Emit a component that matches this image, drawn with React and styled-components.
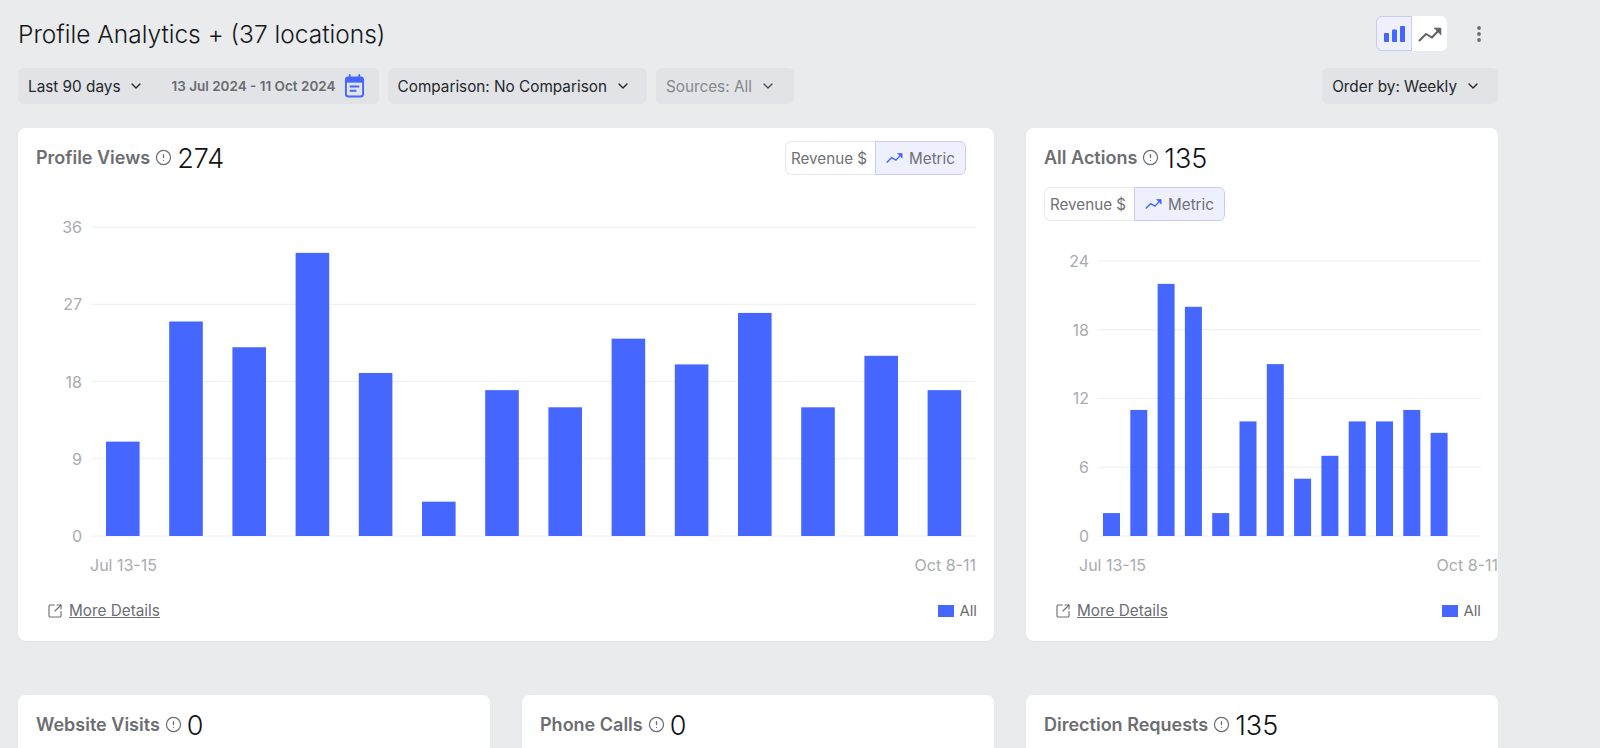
import React from "react"
import styled, { createGlobalStyle } from "styled-components"
import { ChevronDown, CircleAlert, SquareArrowOutUpRight } from "lucide-react"

const GlobalStyle = createGlobalStyle`
  html, body {
    margin: 0;
    height: 100%;
    overflow: hidden;
    background: #e9ebec;
  }
  body {
    font-family: Inter, "Liberation Sans", sans-serif;
  }
`

const Page = styled.div`
  width: 1480px;
  height: 748px;
  padding: 16px 0 0 18px;
  overflow: hidden;
`

const TopBar = styled.div`
  display: flex;
  justify-content: space-between;
  align-items: center;
  height: 35px;
`

const PageTitle = styled.h1`
  margin: 0;
  padding-top: 2px;
  font-size: 24.5px;
  font-weight: 300;
  line-height: 33px;
  color: #15171a;
`

const TopActions = styled.div`
  display: flex;
  align-items: center;
  gap: 20px;
  padding-right: 7px;
`

const ViewToggle = styled.div`
  display: flex;
  height: 35px;
`

const ViewButton = styled.div`
  width: ${(p) => (p.$active ? "36px" : "35px")};
  display: flex;
  align-items: center;
  justify-content: center;
  box-sizing: border-box;
  background: ${(p) => (p.$active ? "#eef0fd" : "#fff")};
  border: 1px solid ${(p) => (p.$active ? "#c6ccf4" : "#fff")};
  border-radius: ${(p) => (p.$active ? "6px 0 0 6px" : "0 6px 6px 0")};
`

const Kebab = styled.div`
  width: 24px;
  display: flex;
  justify-content: center;
`

const FilterRow = styled.div`
  display: flex;
  justify-content: space-between;
  margin-top: 17px;
`

const FilterGroup = styled.div`
  display: flex;
  gap: 9px;
`

const Filter = styled.div`
  display: flex;
  align-items: center;
  height: 36px;
  padding: 0 ${(p) => p.$right || 17}px 0 10px;
  gap: 8px;
  background: #e1e3e6;
  border-radius: 6px;
  font-size: 15.3px;
  color: ${(p) => (p.$muted ? "#85888d" : "#25272b")};
  white-space: nowrap;
`

const DateText = styled.span`
  margin-left: 19px;
  font-size: 13.5px;
  font-weight: 600;
  color: #686b70;
`

const CardGrid = styled.div`
  display: grid;
  grid-template-columns: repeat(3, 472px);
  column-gap: 32px;
  row-gap: 54px;
  margin-top: 24px;
`

const Card = styled.section`
  grid-column: span ${(p) => p.$span || 1};
  height: ${(p) => (p.$small ? "auto" : "513px")};
  padding: 12px 0 ${(p) => (p.$small ? "200px" : "0")};
  box-sizing: border-box;
  background: #fff;
  border-radius: 8px;
  box-shadow: 0 1px 2px rgba(30, 35, 45, 0.04);
  overflow: hidden;
`

const CardHead = styled.div`
  display: flex;
  justify-content: space-between;
  align-items: center;
  padding: 1px 28px 0 18px;
`

const Heading = styled.div`
  display: flex;
  align-items: center;
  height: 34px;
  padding-bottom: 2px;
  box-sizing: border-box;
`

const HeadingName = styled.span`
  font-size: 18px;
  font-weight: 600;
  color: #6c6e72;
`

const HeadingValue = styled.span`
  margin: 2px 0 0 5px;
  font-size: 27px;
  font-weight: 300;
  color: #111316;
`

const InfoIcon = styled(CircleAlert)`
  margin-left: 5px;
  color: #6c6e72;
`

const MetricToggle = styled.div`
  display: inline-flex;
  height: 34px;
  margin: ${(p) => (p.$below ? "12px 0 0 18px" : "0")};
  font-size: 15.2px;
  color: #6e7176;
`

const MetricButton = styled.div`
  display: flex;
  align-items: center;
  justify-content: center;
  gap: 6px;
  width: ${(p) => p.$width}px;
  padding-right: ${(p) => (p.$active ? "0" : "3px")};
  box-sizing: border-box;
  background: ${(p) => (p.$active ? "#eef0fd" : "#fff")};
  border: 1px solid ${(p) => (p.$active ? "#c6ccf4" : "#e7e8ea")};
  border-right-width: ${(p) => (p.$active ? "1px" : "0")};
  border-radius: ${(p) => (p.$active ? "0 6px 6px 0" : "6px 0 0 6px")};
`

const ChartSvg = styled.svg`
  display: block;
  width: 100%;
`

const AxisText = styled.text`
  font-family: Inter, "Liberation Sans", sans-serif;
  font-size: 16px;
  fill: #a9abaf;
`

const CardFoot = styled.div`
  display: flex;
  justify-content: space-between;
  align-items: center;
  height: 51px;
  padding: 0 ${(p) => p.$right}px 0 29px;
`

const DetailsLink = styled.a`
  display: flex;
  align-items: center;
  gap: 6px;
  font-size: 15.3px;
  color: #6c6e72;
  text-decoration: underline;
`

const LegendItem = styled.div`
  display: flex;
  align-items: center;
  gap: 5px;
  font-size: 15px;
  color: #6c6e72;
`

const LegendSwatch = styled.span`
  width: 16px;
  height: 12px;
  background: #4667ff;
`

const BarsIcon = () => (
  <svg width="23" height="18" viewBox="0 0 22 18" fill="#4667ff">
    <rect x="0.5" y="8" width="5" height="9" rx="0.8" />
    <rect x="8.5" y="4.5" width="5" height="12.5" rx="0.8" />
    <rect x="16.5" y="1" width="5" height="16" rx="0.8" />
  </svg>
)

const TrendIcon = ({ width, color }) => (
  <svg width={width} height={(width * 2) / 3} viewBox="0 0 24 16" fill="none" stroke={color} strokeWidth="2">
    <path d="M1 15l7-7 6 3.5 8-8.5" />
    <path d="M16 2.2h6.8V9" fill={color} strokeWidth="1" />
  </svg>
)

const DotsIcon = () => (
  <svg width="6" height="18" viewBox="0 0 6 18" fill="#6a6d71">
    <circle cx="3" cy="3" r="1.9" />
    <circle cx="3" cy="9" r="1.9" />
    <circle cx="3" cy="15" r="1.9" />
  </svg>
)

const CalendarIcon = () => (
  <svg width="21" height="24" viewBox="0 0 22 24" fill="none">
    <path d="M6 0.5v4M16 0.5v4" stroke="#4667ff" strokeWidth="2" strokeLinecap="round" />
    <rect x="2" y="3" width="18" height="20" rx="2.5" stroke="#4667ff" strokeWidth="2" />
    <rect x="2" y="3" width="18" height="5.5" fill="#4667ff" />
    <path d="M6 12.5h10M6 17h7" stroke="#4667ff" strokeWidth="2" />
  </svg>
)

const Chart = ({ height, baseline, ticks, unit, values, barX, pitch, barW, gridX0, gridX1, tickX, startX, endX }) => (
  <ChartSvg height={height}>
    {ticks.map((t) => (
      <g key={t}>
        <line x1={gridX0} x2={gridX1} y1={baseline - t * unit} y2={baseline - t * unit} stroke="#eceef0" />
        <AxisText x={tickX} y={baseline - t * unit + 6} textAnchor="end">
          {t}
        </AxisText>
      </g>
    ))}
    {values.map((v, i) => (
      <rect key={i} x={barX + i * pitch} y={baseline - v * unit} width={barW} height={v * unit} fill="#4667ff" />
    ))}
    <AxisText x={startX} y={baseline + 35}>
      Jul 13-15
    </AxisText>
    <AxisText x={endX} y={baseline + 35} textAnchor="end">
      Oct 8-11
    </AxisText>
  </ChartSvg>
)

const Title = ({ name, value }) => (
  <Heading>
    <HeadingName>{name}</HeadingName>
    <InfoIcon size={17} strokeWidth={1.8} />
    <HeadingValue>{value}</HeadingValue>
  </Heading>
)

const Toggle = ({ below }) => (
  <MetricToggle $below={below}>
    <MetricButton $width={90}>Revenue $</MetricButton>
    <MetricButton $width={91} $active>
      <TrendIcon width={17} color="#4667ff" />
      Metric
    </MetricButton>
  </MetricToggle>
)

const Foot = ({ right }) => (
  <CardFoot $right={right}>
    <DetailsLink>
      <SquareArrowOutUpRight size={16} strokeWidth={1.7} />
      More Details
    </DetailsLink>
    <LegendItem>
      <LegendSwatch />
      All
    </LegendItem>
  </CardFoot>
)

const App = () => (
  <Page>
    <GlobalStyle />
    <TopBar>
      <PageTitle>Profile Analytics + (37 locations)</PageTitle>
      <TopActions>
        <ViewToggle>
          <ViewButton $active>
            <BarsIcon />
          </ViewButton>
          <ViewButton>
            <TrendIcon width={24} color="#5f6266" />
          </ViewButton>
        </ViewToggle>
        <Kebab>
          <DotsIcon />
        </Kebab>
      </TopActions>
    </TopBar>

    <FilterRow>
      <FilterGroup>
        <Filter $right={14}>
          Last 90 days
          <ChevronDown size={16} />
          <DateText>13 Jul 2024 - 11 Oct 2024</DateText>
          <CalendarIcon />
        </Filter>
        <Filter $right={16}>
          Comparison: No Comparison
          <ChevronDown size={16} />
        </Filter>
        <Filter $muted $right={18}>
          Sources: All
          <ChevronDown size={16} color="#4a4c50" />
        </Filter>
      </FilterGroup>
      <Filter>
        Order by: Weekly
        <ChevronDown size={16} />
      </Filter>
    </FilterRow>

    <CardGrid>
      <Card $span={2}>
        <CardHead>
          <Title name="Profile Views" value="274" />
          <Toggle />
        </CardHead>
        <Chart
          height={410}
          baseline={361}
          ticks={[0, 9, 18, 27, 36]}
          unit={8.58}
          values={[11, 25, 22, 33, 19, 4, 17, 15, 23, 20, 26, 15, 21, 17]}
          barX={88}
          pitch={63.2}
          barW={33.6}
          gridX0={73}
          gridX1={958}
          tickX={64}
          startX={72}
          endX={958}
        />
        <Foot right={17} />
      </Card>
      <Card>
        <CardHead>
          <Title name="All Actions" value="135" />
        </CardHead>
        <Toggle below />
        <Chart
          height={364}
          baseline={315}
          ticks={[0, 6, 12, 18, 24]}
          unit={11.46}
          values={[2, 11, 22, 20, 2, 10, 15, 5, 7, 10, 10, 11, 9]}
          barX={77}
          pitch={27.3}
          barW={17}
          gridX0={72}
          gridX1={455}
          tickX={63}
          startX={53}
          endX={472}
        />
        <Foot right={17} />
      </Card>
      <Card $small>
        <CardHead>
          <Title name="Website Visits" value="0" />
        </CardHead>
      </Card>
      <Card $small>
        <CardHead>
          <Title name="Phone Calls" value="0" />
        </CardHead>
      </Card>
      <Card $small>
        <CardHead>
          <Title name="Direction Requests" value="135" />
        </CardHead>
      </Card>
    </CardGrid>
  </Page>
)

export default App
